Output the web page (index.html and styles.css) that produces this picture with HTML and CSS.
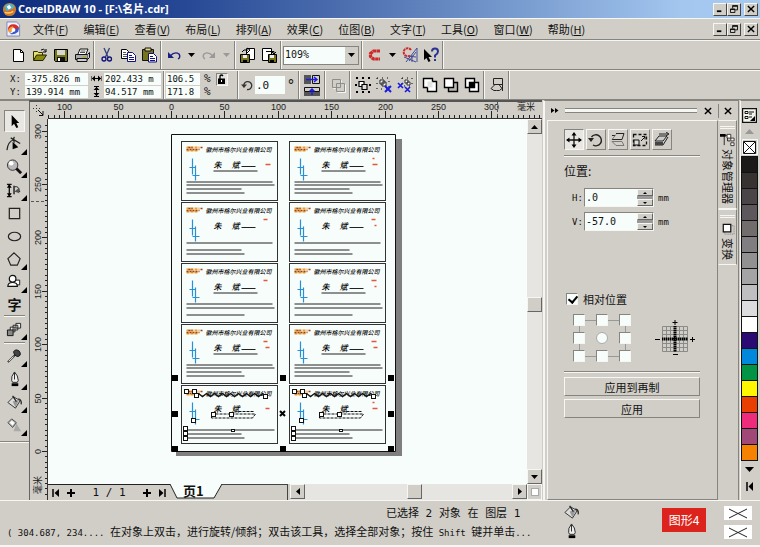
FILE: index.html
```html
<!DOCTYPE html>
<html lang="zh-CN">
<head>
<meta charset="utf-8">
<title>CorelDRAW 10 - [F:\名片.cdr]</title>
<link rel="stylesheet" href="styles.css">
</head>
<body>
<header class="titlebar">
  <svg class="app-icon" viewBox="0 0 16 16"><circle cx="8" cy="8" r="7" fill="#b9853b"/><path d="M3 4q5-4 10 0l-2 5-6 1z" fill="#4fb4cf"/><path d="M2 9q3 2 7-1l5-1q0 6-6 7-5 0-6-5z" fill="#e36a22"/><path d="M5 5l3-2 2 3-3 2z" fill="#fff"/><path d="M3 11q5 2 9-1" stroke="#ffd95a" stroke-width="1.5" fill="none"/></svg>
  <h1>CorelDRAW 10 - [F:\名片.cdr]</h1>
  <div class="winbtns">
    <button aria-label="最小化"><svg viewBox="0 0 9 9"><path d="M1 7h5" stroke="#000" stroke-width="2"/></svg></button>
    <button aria-label="还原"><svg viewBox="0 0 9 9"><path d="M3 4V.5h5.500v5H6M3 1.500h5.500M.5 4.500h5v4h-5zM.5 5h5" fill="none" stroke="#000"/></svg></button>
    <button class="close" aria-label="关闭"><svg viewBox="0 0 9 9"><path d="M1 1l7 7M8 1L1 8" stroke="#000" stroke-width="1.600"/></svg></button>
  </div>
</header>

<nav class="menubar">
  <svg class="doc-icon" viewBox="0 0 16 16"><path d="M1 .5h10l3.500 3v12H1z" fill="#eef0fb" stroke="#7c86b8"/><path d="M2 9q0-6 6-6 4 0 6 4l-3 2-4-2-3 5z" fill="#d62c2c"/><path d="M2 10q1-4 5-5l2 2-4 5z" fill="#f0a03c"/><path d="M4 13q4 2 9-2l1-4-4 1-3 4z" fill="#3b58c8"/><circle cx="8" cy="9" r="2" fill="#fff"/></svg>
  <button>文件(<u>F</u>)</button><button>编辑(<u>E</u>)</button><button>查看(<u>V</u>)</button><button>布局(<u>L</u>)</button><button>排列(<u>A</u>)</button><button>效果(<u>C</u>)</button><button>位图(<u>B</u>)</button><button>文字(<u>T</u>)</button><button>工具(<u>O</u>)</button><button>窗口(<u>W</u>)</button><button>帮助(<u>H</u>)</button>
  <div class="winbtns">
    <button aria-label="最小化文档"><svg viewBox="0 0 9 9"><path d="M1 7h5" stroke="#000" stroke-width="2"/></svg></button>
    <button aria-label="还原文档"><svg viewBox="0 0 9 9"><path d="M3 4V.5h5.500v5H6M3 1.500h5.500M.5 4.500h5v4h-5zM.5 5h5" fill="none" stroke="#000"/></svg></button>
    <button class="close" aria-label="关闭文档"><svg viewBox="0 0 9 9"><path d="M1 1l7 7M8 1L1 8" stroke="#000" stroke-width="1.600"/></svg></button>
  </div>
</nav>

<div class="toolbar">
  <button class="tb" aria-label="新建"><svg viewBox="0 0 16 16"><path d="M2.500 2.500h7l3 3v9h-10z" fill="#fff" stroke="#000"/><path d="M9.500 2.500v3h3" fill="none" stroke="#000"/></svg></button>
  <button class="tb" aria-label="打开"><svg viewBox="0 0 16 16"><path d="M1.500 13V4.500h4l1 1h4V8" fill="#e8e070" stroke="#333300"/><path d="M1.500 13.500l3-5.500h10l-3.500 5.500z" fill="#8a8a10" stroke="#222200"/><path d="M9 3q3-2 4.500 1M14 2v3h-3" fill="none" stroke="#000"/></svg></button>
  <button class="tb" aria-label="保存"><svg viewBox="0 0 16 16"><path d="M1.500 2.500h13v12h-12l-1-1z" fill="#77751b" stroke="#000"/><path d="M4 3h8v5H4z" fill="#d8d8d0"/><path d="M4 10h8v4H4z" fill="#111"/><path d="M5 11h2v3H5z" fill="#fff"/></svg></button>
  <button class="tb" aria-label="打印"><svg viewBox="0 0 16 16"><path d="M4 7l2-5h8l-2 5" fill="#fff" stroke="#111"/><path d="M6.500 4h5M6 5.500h5" stroke="#555"/><path d="M1.500 7.500h12v5h-12z" fill="#aaa" stroke="#111"/><path d="M13.500 7.500l2-2v5l-2 2M3 14.500h10v-3H3z" fill="#ccc" stroke="#111"/><path d="M9 10h3" stroke="#a9a400"/></svg></button>
  <i class="sep"></i>
  <button class="tb" aria-label="剪切"><svg viewBox="0 0 16 16"><path d="M5 1l4 9M10.500 1L6.500 10" stroke="#333f77" stroke-width="1.300"/><circle cx="5" cy="12" r="2" fill="none" stroke="#10107e" stroke-width="1.300"/><circle cx="10.500" cy="12" r="2" fill="none" stroke="#10107e" stroke-width="1.300"/></svg></button>
  <button class="tb" aria-label="复制"><svg viewBox="0 0 16 16"><path d="M1.500 2.500h5l2 2v7h-7z" fill="#fff" stroke="#000"/><path d="M3 5.500h3M3 7.500h4M3 9.500h4" stroke="#555"/><path d="M7.500 5.500h5l3 3v6h-8z" fill="#fff" stroke="#10107e"/><path d="M9 8.500h3M9 10.500h5M9 12.500h5" stroke="#10107e"/></svg></button>
  <button class="tb" aria-label="粘贴"><svg viewBox="0 0 16 16"><path d="M1.500 2.500h11v11h-11z" fill="#77751b" stroke="#111"/><path d="M4 1h6v3H4z" fill="#ddd68a" stroke="#111"/><path d="M7.500 6.500h5l3 3v5.500h-8z" fill="#fff" stroke="#10107e"/><path d="M9 9.500h3M9 11.500h5M9 13.500h5" stroke="#10107e"/></svg></button>
  <i class="sep"></i>
  <button class="tb" aria-label="撤消"><svg viewBox="0 0 16 16"><path d="M4 9q5-5 9-2 2 3-1 5" fill="none" stroke="#1b2080" stroke-width="1.400"/><path d="M2 5v6h6z" fill="#1b2080"/></svg></button>
  <button class="dd" aria-label="撤消列表"><svg viewBox="0 0 7 4"><path d="M0 0h7L3.500 4z"/></svg></button>
  <button class="tb" aria-label="重做"><svg viewBox="0 0 16 16"><path d="M12 9q-5-5-9-2-2 3 1 5" fill="none" stroke="#999" stroke-width="1.400"/><path d="M14 5v6H8z" fill="#999"/></svg></button>
  <button class="dd off" aria-label="重做列表"><svg viewBox="0 0 7 4"><path d="M0 0h7L3.500 4z"/></svg></button>
  <i class="sep"></i>
  <button class="tb" aria-label="导入"><svg viewBox="0 0 16 16"><path d="M6.500 1.500h8v11h-8z" fill="#fff" stroke="#000"/><path d="M.5 7.500h9v8h-9z" fill="#77751b" stroke="#000"/><path d="M3 8h4v3H3z" fill="#eee"/><path d="M3 13h4v2H3z"/><path d="M2 5q1-3 6-2M7 1l3 2-3 3" fill="none" stroke="#000"/></svg></button>
  <button class="tb" aria-label="导出"><svg viewBox="0 0 16 16"><path d="M1.500 1.500h9v12h-9z" fill="#fff" stroke="#000"/><path d="M7.500 7.500h8v8h-8z" fill="#77751b" stroke="#000"/><path d="M9 8h4v3H9z" fill="#eee"/><path d="M9 13h4v2H9z"/><path d="M5 4.500h8v2M11 5l2 2 2-2" fill="none" stroke="#000"/></svg></button>
  <i class="sep"></i>
  <div class="combo">
    <select aria-label="缩放级别"><option>109%</option></select>
    <span class="combo-arrow"><svg viewBox="0 0 7 4"><path d="M0 0h7L3.500 4z"/></svg></span>
  </div>
  <i class="sep"></i>
  <button class="tb" aria-label="应用程序启动器"><svg viewBox="0 0 16 16"><path d="M13 4H6.500L3.500 6.500v3L6.500 12H13" fill="none" stroke="#d02828" stroke-width="3.200" stroke-dasharray="3.400 .4"/></svg></button>
  <button class="dd" aria-label="启动器列表"><svg viewBox="0 0 7 4"><path d="M0 0h7L3.500 4z"/></svg></button>
  <button class="tb" aria-label="社区"><svg viewBox="0 0 16 16"><path d="M4 15L15 1v14M2 10l12 5M6 9l8 1M7 14l7-9M10 8v7" fill="none" stroke="#424c9c"/><path d="M9 3A4 4 0 1 0 8 8.500" fill="none" stroke="#d02828" stroke-width="2" stroke-dasharray="2.500 .7"/></svg></button>
  <button class="tb" aria-label="这是什么"><svg viewBox="0 0 16 16"><path d="M1 2v11l2.500-2 2 4 2-1-2-4H9z"/><path d="M9 4.500q0-3 3-3t3 3q0 2-3 4v2" fill="none" stroke="#2a3390" stroke-width="2"/><path d="M11 12h2v2h-2z" fill="#2a3390"/></svg></button>
  <i class="sep"></i>
</div>

<div class="toolbar propbar">
  <div class="pos-grid">
    <label for="px">X:</label><input id="px" value="-375.826 m"><svg viewBox="0 0 11 11"><path d="M0 3v5M11 3v5" stroke="#000"/><path d="M1 5.500h9" stroke="#000"/><path d="M1 5.500l3-3v6zM10 5.500l-3-3v6z"/></svg><input aria-label="宽度" value="202.433 m">
    <label for="py">Y:</label><input id="py" value="139.914 mm"><svg viewBox="0 0 11 11"><path d="M3 .5h5M3 10.500h5M5.500 1v9" stroke="#000"/><path d="M5.500 1l-3 3h6zM5.500 10l-3-3h6z"/></svg><input aria-label="高度" value="94.517 mm">
  </div>
  <i class="sep"></i>
  <div class="scale-grid">
    <input id="sx" value="106.5"><label for="sx">%</label>
    <input id="sy" value="171.8"><label for="sy">%</label>
  </div>
  <button class="lock" aria-label="锁定比例"><svg viewBox="0 0 10 10"><path d="M1 4.500h7V10H1z"/><path d="M3 5V2q1.500-2 3 0" fill="none" stroke="#000" stroke-width="1.300"/><path d="M4 6h1v2H4z" fill="#fff"/></svg></button>
  <i class="sep"></i>
  <label class="rot" for="rot"><svg viewBox="0 0 12 12"><path d="M3 8a4 4 0 1 1 3 2.500" fill="none" stroke="#333" stroke-width="1.300"/><path d="M0 5.500h6L3 9z" fill="#333"/></svg></label>
  <input class="rot-in" id="rot" value=".0"><span class="deg">°</span>
  <i class="sep"></i>
  <div class="mirror">
    <button aria-label="水平镜像"><svg viewBox="0 0 16 9"><path d="M0 0h7v9H0z" fill="#555"/><path d="M8.500.5h7v8h-7z" fill="#d0cec7" stroke="#111"/><path d="M2 4.500h11M10 2l3 2.500L10 7" fill="none" stroke="#1a1ae0" stroke-width="1.400"/></svg></button>
    <button aria-label="垂直镜像"><svg viewBox="0 0 16 9"><path d="M.5.500h15v4H.5z" fill="#d0cec7" stroke="#111"/><path d="M0 5h16v4H0z" fill="#555"/><path d="M8 8V2M5.500 4.500L8 2l2.500 2.500" fill="none" stroke="#1a1ae0" stroke-width="1.400"/></svg></button>
  </div>
  <i class="sep"></i>
  <button class="tb" aria-label="合并"><svg viewBox="0 0 16 16"><path d="M2.500 2.500h8v8h-8z" fill="none" stroke="#8e8e8a"/><path d="M6.500 6.500h8v8h-8z" fill="none" stroke="#8e8e8a"/><path d="M3.500 11.500h2M11.500 3.500v2M7.500 15.500h8v-8" fill="none" stroke="#f6f6f2"/></svg></button>
  <i class="sep"></i>
  <button class="tb" aria-label="群组"><svg viewBox="0 0 16 16"><path d="M1 0h2v2H1zM7 0h2v2H7zM13 0h2v2h-2zM0 7h2v2H0zM14 7h2v2h-2zM1 14h2v2H1zM7 14h2v2H7zM13 14h2v2h-2z"/><path d="M4 4.500h5v5H4z" fill="#fff" stroke="#000" stroke-width="1.200"/><path d="M7 7.500h5v5H7z" fill="#ddd" stroke="#000" stroke-width="1.200"/></svg></button>
  <button class="tb" aria-label="取消群组"><svg viewBox="0 0 16 16"><path d="M1 1h12v11H1z" fill="none" stroke="#000" stroke-dasharray="1 4"/><path d="M4 3h4v4H4zM6 5h4v4H6z" fill="#fff" stroke="#222"/><path d="M9 9l6 6M15 9l-6 6" stroke="#1a1ae0" stroke-width="2"/></svg></button>
  <button class="tb" aria-label="取消全部群组"><svg viewBox="0 0 16 16"><path d="M5 1h10v8H5z" fill="none" stroke="#000" stroke-dasharray="1 4"/><path d="M8 3h3v3H8zM10 5h3v3h-3z" fill="#fff" stroke="#333"/><path d="M1 6l5 5M6 6l-5 5M8 10l5 5M13 10l-5 5" stroke="#1a1ae0" stroke-width="1.600"/></svg></button>
  <i class="sep"></i>
  <button class="tb" aria-label="焊接"><svg viewBox="0 0 16 16"><path d="M1.500 1.500h9v3h4v10h-9v-4h-4z" fill="#fff" stroke="#000" stroke-width="1.400"/><path d="M5.500 4.500h5v6h-5z" fill="#e5e5e0"/></svg></button>
  <button class="tb" aria-label="修剪"><svg viewBox="0 0 16 16"><path d="M5.500 5.500h9v9h-9z" fill="#b8b8b4" stroke="#000" stroke-width="1.400"/><path d="M1.500 1.500h9v9h-9z" fill="#fff" stroke="#000" stroke-width="1.400"/></svg></button>
  <button class="tb" aria-label="相交"><svg viewBox="0 0 16 16"><path d="M1.500 1.500h9v9h-9zM5.500 5.500h9v9h-9z" fill="#fff" stroke="#000" stroke-width="1.400"/><path d="M5 5h6v6H5z"/></svg></button>
  <i class="sep"></i>
  <button class="tb" aria-label="转换为曲线"><svg viewBox="0 0 16 16"><path d="M4.500 1.500h9v6h-9z" fill="none" stroke="#222"/><path d="M13.500 7v7M6 7.500L2 11.500q3 3 5.500 2 3 1 5.500-2l-3-4" fill="none" stroke="#222"/></svg></button>
  <i class="sep"></i>
</div>

<main>
  <aside class="toolbox">
    <button class="tool on" aria-label="挑选工具"><svg viewBox="0 0 18 18"><path d="M6 2v12l2.500-2.500L11 16l2-1-2-4.500h3z"/></svg></button>
    <button class="tool fly" aria-label="形状工具"><svg viewBox="0 0 18 18"><path d="M1 15q1-9 7-11M5 2l10 6M9 1q-2 2 0 6" fill="none" stroke="#222" stroke-width="1.300"/><path d="M7 6v8l6-2z"/></svg></button>
    <button class="tool fly" aria-label="缩放工具"><svg viewBox="0 0 18 18"><circle cx="7" cy="6.500" r="5.500" fill="#b9b9b9" stroke="#333"/><circle cx="5.500" cy="4.500" r="2.500" fill="#fff"/><path d="M11 10l5 5" stroke="#111" stroke-width="3"/></svg></button>
    <button class="tool fly" aria-label="刻刀与度量"><svg viewBox="0 0 18 18"><path d="M1 2.500h5M1 15.500h5M3.500 3v12M8.500 4v9" stroke="#111" stroke-width="1.400"/><path d="M3.500 2L1 6h5zM3.500 16L1 12h5z"/><path d="M9 5q5-1 5 5M10 10h5" fill="none" stroke="#222"/><path d="M9 10l5-4v6z" fill="#555"/></svg></button>
    <button class="tool" aria-label="矩形工具"><svg viewBox="0 0 18 18"><path d="M3.500 3.500h11v11h-11z" fill="none" stroke="#222" stroke-width="1.300"/></svg></button>
    <button class="tool" aria-label="椭圆工具"><svg viewBox="0 0 18 18"><ellipse cx="9" cy="9" rx="6.500" ry="4.500" fill="none" stroke="#222" stroke-width="1.300"/></svg></button>
    <button class="tool fly" aria-label="多边形工具"><svg viewBox="0 0 18 18"><path d="M8.500 2L15 8l-3 7H5L2 8z" fill="none" stroke="#222" stroke-width="1.200"/></svg></button>
    <button class="tool fly" aria-label="基本形状"><svg viewBox="0 0 18 18"><path d="M7.500 6.500h7v5h-7z" fill="#fff" stroke="#111"/><circle cx="7" cy="5" r="3.500" fill="#fff" stroke="#111" stroke-width="1.300"/><path d="M2 13q0-4 5-4t5 4z" fill="#fff" stroke="#111" stroke-width="1.300"/></svg></button>
    <button class="tool text" aria-label="文本工具">字</button>
    <i class="hr"></i>
    <button class="tool fly" aria-label="交互式调和"><svg viewBox="0 0 18 18"><path d="M10.500 2.500h5v5h-5zM7.500 4.500h5v5h-5zM4.500 6.500h5v5h-5z" fill="#eee" stroke="#222"/><path d="M1.500 9.500h6v6h-6z" fill="#888" stroke="#111"/></svg></button>
    <i class="hr"></i>
    <button class="tool fly" aria-label="滴管工具"><svg viewBox="0 0 18 18"><path d="M2 15l8-8" stroke="#333" stroke-width="2"/><path d="M8 4q1 5 5 5 3-1 2-4-1-3-4-3-2 0-3 2z" fill="#444" stroke="#111"/><path d="M3 14l5-5" stroke="#eee"/></svg></button>
    <button class="tool fly" aria-label="轮廓工具"><svg viewBox="0 0 18 18"><path d="M9 1q-4 5-3 9l1 2h5l1-2q0-5-4-9z" fill="#eee" stroke="#222"/><path d="M9 2v7" stroke="#222"/><path d="M6 13h7v3H6z"/></svg></button>
    <button class="tool fly" aria-label="填充工具"><svg viewBox="0 0 18 18"><path d="M2 9l6-6 7 4-5 8z" fill="#ddd" stroke="#333"/><path d="M7 8l7-2-4 8z" fill="#999"/><path d="M7 2l4 6M13 5q4 1 3 6" fill="none" stroke="#222" stroke-width="1.300"/></svg></button>
    <button class="tool fly" aria-label="交互式填充"><svg viewBox="0 0 18 18"><path d="M2 6l4-4 5 4-4 5z" fill="#bbb" stroke="#444"/><path d="M4 6l2-2 3 2-2 3z" fill="#fff"/><path d="M11 7l5 8H8z" fill="#aaa"/></svg></button>
    <i class="hr last"></i>
  </aside>

  <section class="doc">
    <div class="ruler-corner"><svg viewBox="0 0 12 12"><path d="M3.500 0v9M0 3.500h9" stroke="#333" stroke-dasharray="1 2"/><path d="M5 5l5 5M10 6v4.500H6" fill="none" stroke="#111"/></svg></div>
    <div class="hruler"><svg id="hruler" width="493" height="17" viewBox="48 102 493 17"></svg></div>
    <div class="vruler"><svg id="vruler" width="18" height="381" viewBox="30 119 18 381"></svg></div>
    <div class="canvas">
      <svg id="page" width="478" height="365" viewBox="48 119 478 365">
        <path d="M176 139h226v317H176z" fill="#7f7f7f"/>
        <path d="M171.500 134.500h224v317h-224z" fill="#f7fdfa" stroke="#111"/>
        <g id="cards"></g>
        <g id="handles"></g>
      </svg>
    </div>
    <div class="vscroll">
      <button aria-label="向上滚动"><svg viewBox="0 0 7 4"><path d="M0 4h7L3.500 0z"/></svg></button>
      <span class="thumb"></span>
      <button aria-label="向下滚动"><svg viewBox="0 0 7 4"><path d="M0 0h7L3.500 4z"/></svg></button>
    </div>
    <div class="pagebar">
      <div class="pagenav">
        <button aria-label="首页"><svg viewBox="0 0 8 8"><path d="M1 0v8" stroke="#000" stroke-width="1.500"/><path d="M7 0v8L2.500 4z"/></svg></button>
        <button aria-label="前加页"><svg viewBox="0 0 8 8"><path d="M4 0v8M0 4h8" stroke="#000" stroke-width="2"/></svg></button>
        <span class="pagecount">1 / 1</span>
        <button aria-label="后加页"><svg viewBox="0 0 8 8"><path d="M4 0v8M0 4h8" stroke="#000" stroke-width="2"/></svg></button>
        <button aria-label="末页"><svg viewBox="0 0 8 8"><path d="M7 0v8" stroke="#000" stroke-width="1.500"/><path d="M1 0v8l4.500-4z"/></svg></button>
      </div>
      <button class="pagetab"><svg viewBox="0 0 52 15"><path d="M0 0l7 14h37l8-14z" fill="#f7fdfa"/><path d="M0 0l7 14h37l8-14" fill="none" stroke="#222"/></svg><span>页1</span></button>
      <span class="tabspace"></span>
      <div class="hscroll">
        <button aria-label="向左滚动"><svg viewBox="0 0 4 7"><path d="M4 0v7L0 3.500z"/></svg></button>
        <span class="thumb"></span>
        <button aria-label="向右滚动"><svg viewBox="0 0 4 7"><path d="M0 0v7l4-3.500z"/></svg></button>
      </div>
    </div>
    <div class="navigator"><i></i></div>
  </section>

  <section class="docker">
    <div class="dockhead">
      <svg class="chev" viewBox="0 0 8 5"><path d="M0 0v5l3.500-2.500zM4 0v5l3.500-2.500z"/></svg>
      <span class="grip"></span>
      <button aria-label="关闭泊坞窗"><svg viewBox="0 0 9 9"><path d="M1 1l7 7M8 1L1 8" stroke="#000" stroke-width="1.600"/></svg></button>
      <button class="second" aria-label="关闭全部"><svg viewBox="0 0 9 9"><path d="M1 1l7 7M8 1L1 8" stroke="#000" stroke-width="1.600"/></svg></button>
    </div>
    <div class="dockbody">
      <div class="panel">
        <div class="modes">
          <button class="on" aria-label="位置"><svg viewBox="0 0 16 16"><path d="M8 1v14M1 8h14" stroke="#111" stroke-width="1.300"/><path d="M8 0L5.500 3.500h5zM8 16l-2.500-3.500h5zM0 8l3.500-2.500v5zM16 8l-3.500-2.500v5z"/></svg></button>
          <button aria-label="旋转"><svg viewBox="0 0 16 16"><path d="M3.500 5A5.500 5.500 0 1 1 5 13" fill="none" stroke="#222" stroke-width="1.400"/><path d="M0 6h6L3 10z" fill="#222"/></svg></button>
          <button aria-label="缩放和镜像"><svg viewBox="0 0 16 16"><path d="M6 1.500h8M5 3.500h-3M2 7.500h10l2-6" fill="none" stroke="#222"/><path d="M2 7.500l4-5M2 9.500h10l2 4H6z" fill="none" stroke="#777"/></svg></button>
          <button aria-label="大小"><svg viewBox="0 0 16 16"><path d="M1.500 2.500h13v11h-13z" fill="none" stroke="#111" stroke-width="1.300" stroke-dasharray="3 2"/><path d="M2 8h5v5H2z" fill="#ddd" stroke="#111"/><path d="M9 9l4-4M10 4.500h3v3" fill="none" stroke="#111"/></svg></button>
          <button aria-label="倾斜"><svg viewBox="0 0 16 16"><path d="M1 9l4-5h8l-4 5zM1 13h8l5-8" fill="#ccc" stroke="#222"/><path d="M1 10h8v3H1z" fill="#444"/><path d="M5 2h9M12 0l3 2-3 2" fill="none" stroke="#222"/></svg></button>
        </div>
        <hr>
        <h2>位置:</h2>
        <div class="field"><label for="h">H:</label><div class="spin"><input id="h" value=".0"><span><button aria-label="增大 H"><svg viewBox="0 0 4 2"><path d="M0 2h4L2 0z"/></svg></button><button aria-label="减小 H"><svg viewBox="0 0 4 2"><path d="M0 0h4L2 2z"/></svg></button></span></div><b>mm</b></div>
        <div class="field"><label for="v">V:</label><div class="spin"><input id="v" value="-57.0"><span><button aria-label="增大 V"><svg viewBox="0 0 4 2"><path d="M0 2h4L2 0z"/></svg></button><button aria-label="减小 V"><svg viewBox="0 0 4 2"><path d="M0 0h4L2 2z"/></svg></button></span></div><b>mm</b></div>
        <label class="rel"><input type="checkbox" checked>相对位置</label>
        <div class="anchors">
          <div class="anchor-grid">
            <input type="checkbox" aria-label="左上"><input type="checkbox" aria-label="上"><input type="checkbox" aria-label="右上">
            <input type="checkbox" aria-label="左"><input type="radio" aria-label="中心"><input type="checkbox" aria-label="右">
            <input type="checkbox" aria-label="左下"><input type="checkbox" aria-label="下"><input type="checkbox" aria-label="右下">
          </div>
          <svg class="axes" viewBox="0 0 40 38"><path d="M7.500 7.500h25v25h-25zM11.500 7v26M15.500 7v26M24.500 7v26M28.500 7v26M7 11.500h26M7 15.500h26M7 24.500h26M7 28.500h26" fill="none" stroke="#8b8b88"/><path d="M20 7v26M7 20h26" stroke="#000" stroke-width="3" stroke-dasharray="1.500 .5"/><path d="M0 20.500h5M35 20.500h5M37.500 18v5M17.500 3.500h5M20 1v5M18 35.500h5" stroke="#000"/></svg>
        </div>
        <hr>
        <div class="applies"><button>应用到再制</button><button>应用</button></div>
      </div>
      <div class="tabs">
        <button><i></i><svg viewBox="0 0 16 16"><path d="M1 3.500h7M4.500 3.500V14M8 3.500v6h3" fill="none" stroke="#222"/><path d="M0 2h3v3H0zM3 2h3v3H3z"/><path d="M7.500 2.500h4v4h-4zM11.500 6.500h3.500v3h-3.500zM11.500 11.500h3.500v3h-3.500z" fill="#fff" stroke="#333"/></svg><span>对象管理器</span></button>
        <button class="active"><i></i><svg viewBox="0 0 16 16"><path d="M5 5h10v9H5z" fill="none" stroke="#777" stroke-dasharray="1 1"/><path d="M3.500 3.500h8v8h-8z" fill="#fff" stroke="#111" stroke-width="1.300"/></svg><span>变换</span></button>
      </div>
    </div>
  </section>

  <aside class="palette">
    <svg class="pal-icon" viewBox="0 0 15 15"><path d="M.5.500h14v14H.5z" fill="#f4f4ee" stroke="#111" stroke-width="1.400"/><path d="M3 3.500h3v2H3zM3 8.500h3v2H3z" fill="none" stroke="#111"/><path d="M7 4h5M7 6h3M7 9h3" stroke="#111"/><path d="M13 8v5H8z"/></svg>
    <svg class="arrow off" viewBox="0 0 9 5"><path d="M0 5h9L4.500 0z"/></svg>
    <button class="none" aria-label="无颜色"><svg viewBox="0 0 13 13"><path d="M.5.500h12v12H.5zM1 1l11 11M12 1L1 12" fill="#fff" stroke="#111"/></svg></button>
    <div class="swatches" id="swatches"></div>
    <svg class="arrow" viewBox="0 0 9 5"><path d="M0 0h9L4.500 5z"/></svg>
    <svg class="expand" viewBox="0 0 8 9"><path d="M1 0v9" stroke="#000" stroke-width="1.500"/><path d="M7 0v9L2.500 4.500z"/></svg>
  </aside>
</main>

<footer class="status">
  <div class="messages">
    <p class="selection">已选择<kbd> 2 </kbd>对象<kbd> </kbd>在<kbd> </kbd>图层<kbd> 1</kbd></p>
    <p><kbd>( 304.687, 234.... </kbd>在对象上双击，进行旋转/倾斜；双击该工具，选择全部对象；按住<kbd> Shift </kbd>键并单击<kbd>...</kbd></p>
  </div>
  <div class="fills">
    <svg viewBox="0 0 18 18"><path d="M2 9l6-6 7 4-5 8z" fill="#ddd" stroke="#333"/><path d="M7 8l7-2-4 8z" fill="#999"/><path d="M7 2l4 6M13 5q4 1 3 6" fill="none" stroke="#222" stroke-width="1.300"/></svg>
    <svg viewBox="0 0 18 18"><path d="M9 1q-4 5-3 9l1 2h5l1-2q0-5-4-9z" fill="#eee" stroke="#222"/><path d="M9 2v7" stroke="#222"/><path d="M6 13h7v3H6z"/></svg>
  </div>
  <strong class="figure">图形4</strong>
  <div class="nofill">
    <svg viewBox="0 0 28 14"><path d="M0 0h28v14H0z" fill="#fff"/><path d="M5 3l18 9M23 3L5 12" stroke="#222"/></svg>
    <svg viewBox="0 0 28 14"><path d="M0 0h28v14H0z" fill="#fff"/><path d="M5 3l18 9M23 3L5 12" stroke="#222"/></svg>
  </div>
</footer>
<script src="app.js"></script>
</body>
</html>
```
FILE: styles.css
```css
:root {
  --face: #d0cec7;
  --light: #f6f6f2;
  --dark: #85847f;
  --paper: #f7fdfa;
  --cjk: "Noto Sans CJK SC", sans-serif;
  --mono: "DejaVu Sans Mono", "Noto Sans CJK SC", monospace;
}
* { box-sizing: border-box; }
body {
  margin: 0;
  min-height: 100vh;
  display: flex;
  flex-direction: column;
  background: var(--face);
  color: #111;
  font: 11px/14px var(--cjk);
}
svg { display: block; flex: none; }
button {
  margin: 0;
  padding: 0;
  border: 0;
  background: none;
  color: inherit;
  font: inherit;
  display: flex;
  align-items: center;
  justify-content: center;
}
input, select {
  margin: 0;
  padding: 0;
  min-width: 0;
  border: 0;
  border-radius: 0;
  background: var(--paper);
  color: #111;
  font: 9px/12px var(--mono);
}

.titlebar {
  height: 18px;
  display: flex;
  align-items: center;
  gap: 1px;
  padding: 0 2px;
  background: linear-gradient(90deg, #102c7c, #1f4190 20%, #5577b5 50%, #a3c7ef 90%, #a6caf0);
}
.app-icon { width: 15px; height: 15px; }
.titlebar h1 {
  flex: 1;
  margin: 0;
  color: #fff;
  font: bold 11px/16px "Open Sans", var(--cjk);
}
.winbtns { display: flex; margin-left: auto; }
.winbtns button {
  width: 14px;
  height: 13px;
  background: var(--face);
  border: 1px solid;
  border-color: var(--light) #444 #444 var(--light);
}
.winbtns .close { margin-left: 3px; }
.winbtns svg { width: 8px; height: 8px; }

.menubar {
  height: 22px;
  display: flex;
  align-items: center;
  gap: 15px;
  padding: 0 2px 0 6px;
  border-top: 1px solid var(--light);
  border-bottom: 1px solid var(--dark);
}
.doc-icon { width: 15px; height: 16px; margin-right: -3px; }
.menubar u { text-underline-offset: 1px; }

.toolbar {
  height: 30px;
  display: flex;
  align-items: center;
  padding-left: 8px;
  border-top: 1px solid var(--light);
  border-bottom: 1px solid var(--dark);
}
.tb { width: 21px; height: 21px; }
.tb svg { width: 16px; height: 16px; }
.dd { width: 14px; height: 21px; }
.dd svg { width: 7px; height: 4px; }
.off { fill: #999; }
.sep {
  flex: none;
  align-self: stretch;
  width: 2px;
  margin: 0 1px;
  border-left: 1px solid var(--dark);
  border-right: 1px solid var(--light);
}
.combo { position: relative; width: 76px; height: 19px; margin-right: 1px; }
.combo select {
  appearance: none;
  width: 100%;
  height: 100%;
  padding: 0 1px;
  border: 1px solid var(--dark);
  font-size: 10px;
}
.combo-arrow {
  position: absolute;
  right: 1px;
  top: 1px;
  bottom: 1px;
  width: 13px;
  display: flex;
  align-items: center;
  justify-content: center;
  background: var(--face);
  pointer-events: none;
}
.combo-arrow svg { width: 7px; height: 4px; }

.propbar { font: 9px/12px var(--mono); }
.pos-grid {
  display: grid;
  grid-template-columns: 17px 63px 16px 57px;
  grid-auto-rows: 12px;
  row-gap: 1px;
  align-items: stretch;
  margin-right: 1px;
}
.pos-grid label { padding-left: 2px; }
.pos-grid svg { width: 11px; height: 11px; margin-left: 3px; }
.pos-grid input, .scale-grid input { width: 100%; padding-left: 1px; }
.scale-grid {
  display: grid;
  grid-template-columns: 34px 12px;
  grid-auto-rows: 12px;
  gap: 1px 4px;
}
.scale-grid label { font-size: 11px; }
.lock {
  width: 12px;
  height: 13px;
  margin: 0 8px 12px 0;
  background: #e5e4df;
  border: 1px solid;
  border-color: var(--dark) var(--light) var(--light) var(--dark);
}
.lock svg { width: 10px; height: 10px; }
.rot svg { width: 12px; height: 12px; margin: 0 2px 0 1px; }
.rot-in { width: 30px; height: 18px; font-size: 11px; padding-left: 1px; }
.deg { width: 12px; font-size: 14px; text-align: center; }
.mirror { display: grid; gap: 3px; padding: 0 3px; }
.mirror svg { width: 16px; height: 9px; }

main { flex: 1; display: flex; min-height: 0; }

.toolbox {
  flex: none;
  width: 29px;
  display: flex;
  flex-direction: column;
  align-items: center;
  padding-top: 9px;
  border-top: 1px solid var(--dark);
}
.tool { position: relative; width: 21px; height: 22px; margin-bottom: 1px; }
.tool svg { width: 17px; height: 17px; }
.tool.on {
  background: #e8e7e3;
  border: 1px solid;
  border-color: var(--dark) var(--light) var(--light) var(--dark);
}
.tool.fly::after {
  content: "";
  position: absolute;
  right: -2px;
  bottom: 0;
  border: 3px solid;
  border-color: transparent #000 #000 transparent;
}
.tool.text { font: bold 14px/18px var(--cjk); height: 19px; }
.hr {
  flex: none;
  width: 21px;
  height: 2px;
  margin: 1px 0;
  border-top: 1px solid var(--dark);
  border-bottom: 1px solid var(--light);
}
.hr.last { width: 100%; margin-top: 4px; }

.doc {
  flex: 1;
  min-width: 0;
  display: grid;
  grid-template-columns: 18px minmax(0, 1fr) 15px;
  grid-template-rows: 17px minmax(0, 1fr) 16px;
  border-top: 2px solid #555;
  border-left: 1px solid #666;
}
.ruler-corner { display: grid; place-items: center; }
.ruler-corner svg { width: 12px; height: 12px; }
.hruler { grid-column: 2 / 4; overflow: hidden; border-bottom: 1px solid #333; }
.vruler { grid-row: 2 / 4; overflow: hidden; border-right: 1px solid #333; }
.hruler text, .vruler text { font: 9px "Liberation Sans", var(--cjk); text-anchor: middle; fill: #222; }
.canvas { overflow: hidden; background: var(--paper); }
.vscroll, .hscroll {
  display: flex;
  background: #e6e5e1;
}
.vscroll { flex-direction: column; justify-content: space-between; }
.vscroll button, .hscroll button, .thumb {
  flex: none;
  width: 15px;
  height: 15px;
  background: var(--face);
  border: 1px solid;
  border-color: var(--light) #666 #666 var(--light);
}
.vscroll svg { width: 7px; height: 4px; }
.hscroll svg { width: 4px; height: 7px; }
.vscroll .thumb { margin-top: 6px; }
.pagebar { grid-column: 2; display: flex; min-width: 0; }
.pagenav {
  display: flex;
  align-items: center;
  gap: 7px;
  padding: 0 4px 0 4px;
  border-top: 1px solid #222;
}
.pagenav svg { width: 8px; height: 8px; }
.pagecount { width: 54px; text-align: center; font: 11px/14px var(--mono); }
.pagetab { position: relative; width: 51px; height: 15px; }
.pagetab svg { width: 52px; height: 15px; }
.pagetab span { position: absolute; left: 13px; top: 0; font: bold 13px/14px var(--cjk); }
.tabspace { width: 67px; border: 1px solid #444; border-width: 1px 1px 0 0; }
.hscroll { flex: 1; margin-left: 2px; justify-content: space-between; }
.hscroll .thumb { margin-left: 12px; }
.navigator { display: grid; place-items: center; background: var(--face); border: 1px solid var(--light); }
.navigator i { width: 8px; height: 8px; background: #fff; border: 1px solid #aaa; }

.docker {
  flex: none;
  width: 196px;
  display: flex;
  flex-direction: column;
  border-top: 1px solid var(--dark);
  border-left: 2px solid var(--light);
  border-right: 1px solid var(--dark);
  margin-left: 1px;
}
.dockhead { height: 19px; display: flex; align-items: center; gap: 6px; padding: 0 6px; }
.chev { width: 8px; height: 5px; }
.grip { flex: 1; height: 5px; border: 1px solid var(--dark); border-width: 1px 0; background: var(--light); }
.dockhead button { width: 9px; height: 14px; }
.dockhead button svg { width: 8px; height: 8px; }
.dockhead .second { width: 14px; border-left: 1px solid var(--dark); padding-left: 4px; }
.dockbody { flex: 1; display: flex; }
.panel {
  flex: 1;
  margin-left: 2px;
  padding: 8px 17px 0 16px;
  border: 1px solid;
  border-color: var(--light) var(--dark) var(--dark) var(--light);
}
.modes { display: flex; gap: 2px; }
.modes button {
  width: 20px;
  height: 21px;
  border: 1px solid;
  border-color: var(--light) var(--dark) var(--dark) var(--light);
}
.modes .on { background: #e8e7e3; border-color: var(--dark) var(--light) var(--light) var(--dark); }
.modes svg { width: 16px; height: 16px; }
.panel hr { height: 2px; margin: 5px 0 6px; border: 0; border-top: 1px solid var(--dark); border-bottom: 1px solid var(--light); }
.panel .anchors + hr { margin: 9px 0 4px; }
.panel h2 { margin: 0 0 9px; font: 12px/16px var(--cjk); }
.field { display: flex; align-items: center; gap: 2px; margin-bottom: 5px; padding-left: 8px; font: 9px/12px var(--mono); }
.field label { width: 10px; white-space: nowrap; }
.field b { margin-left: 2px; font-weight: normal; }
.spin {
  display: flex;
  width: 70px;
  height: 19px;
  border: 1px solid;
  border-color: var(--dark) var(--light) var(--light) var(--dark);
}
.spin input { flex: 1; font-size: 10px; padding-left: 1px; }
.spin span { width: 16px; display: flex; flex-direction: column; justify-content: space-between; background: #999; }
.spin button { height: 7px; background: var(--face); border: 1px solid; border-color: var(--light) #666 #666 var(--light); }
.spin svg { width: 4px; height: 2px; }
.rel { display: flex; align-items: center; gap: 5px; margin: 61px 0 8px 2px; font: 11px/14px var(--cjk); }
.rel input, .anchor-grid input {
  appearance: none;
  background: var(--paper);
  border: 1px solid;
  border-color: var(--dark) var(--light) var(--light) var(--dark);
}
.rel input { position: relative; width: 12px; height: 12px; }
.rel input::after {
  content: "";
  position: absolute;
  left: 3px;
  top: 0;
  width: 4px;
  height: 7px;
  border: solid #000;
  border-width: 0 2px 2px 0;
  transform: rotate(40deg);
}
.anchors { display: flex; gap: 24px; margin-left: 9px; align-items: center; }
.anchor-grid {
  display: grid;
  grid-template-columns: repeat(3, 12px);
  gap: 6px 11px;
  background:
    linear-gradient(#999, #999) 6px 6px / 46px 1px no-repeat,
    linear-gradient(#999, #999) 6px 42px / 46px 1px no-repeat,
    linear-gradient(#999, #999) 6px 6px / 1px 36px no-repeat,
    linear-gradient(#999, #999) 52px 6px / 1px 36px no-repeat;
}
.anchor-grid input { width: 12px; height: 12px; }
.anchor-grid input[type=radio] { border-radius: 50%; border-color: #aaa; }
.axes { width: 40px; height: 38px; }
.applies { display: grid; gap: 3px; }
.applies button {
  height: 19px;
  border: 1px solid;
  border-color: var(--light) var(--dark) var(--dark) var(--light);
}
.tabs { width: 19px; margin-right: 1px; }
.tabs button {
  width: 100%;
  flex-direction: column;
  justify-content: flex-start;
  gap: 2px;
  padding: 5px 0 4px;
  border: 1px solid;
  border-color: var(--light) var(--dark) var(--light) transparent;
  font: 11px/14px var(--cjk);
}
.tabs i { width: 15px; height: 3px; border: 1px solid var(--light); border-width: 1px 0; margin-bottom: 1px; }
.tabs svg { width: 15px; height: 15px; }
.tabs span { writing-mode: vertical-rl; text-orientation: sideways; }

.palette {
  flex: none;
  width: 20px;
  margin-left: 1px;
  display: flex;
  flex-direction: column;
  align-items: center;
  padding: 7px 2px 0 0;
  border-top: 1px solid var(--dark);
  border-left: 1px solid var(--light);
}
.pal-icon { width: 15px; height: 15px; }
.arrow { width: 9px; height: 5px; margin: 6px 0 5px; }
.none { width: 16px; height: 16px; margin-bottom: 1px; border: 1px solid var(--light); }
.none svg { width: 13px; height: 13px; }
.swatches { width: 17px; border: 1px solid #111; border-bottom: 0; }
.swatches button { width: 100%; height: 16px; border-bottom: 1px solid #111; }
.expand { width: 8px; height: 9px; margin-top: 5px; }

.status {
  height: 47px;
  display: flex;
  align-items: center;
  padding: 0 8px 2px 7px;
  border-top: 1px solid var(--light);
  border-bottom: 2px solid var(--light);
}
.messages { width: 546px; white-space: nowrap; font-size: 11px; }
.messages p { margin: 0; line-height: 19px; }
.messages .selection { padding-left: 379px; }
.messages kbd { font: 9px/12px var(--mono); white-space: pre; }
.messages .selection kbd { font-size: 11px; }
.fills { margin-left: 10px; }
.fills svg { width: 17px; height: 17px; margin: 2px 0; }
.figure {
  margin: 0 18px 5px auto;
  width: 44px;
  background: #dc241c;
  color: #fff;
  text-align: center;
  font: 12px/24px var(--cjk);
}
.nofill { display: grid; gap: 5px; }
.nofill svg { width: 28px; height: 14px; }
```
FILE: app.js
```js
const NS = "http://www.w3.org/2000/svg";

function add(parent, tag, attrs, text) {
  const el = document.createElementNS(NS, tag);
  for (const k in attrs) el.setAttribute(k, attrs[k]);
  if (text) el.textContent = text;
  parent.appendChild(el);
  return el;
}

// Rulers: a tick every 5 mm, a labelled tick every 50 mm.
const STEP = 5.34;
const hr = document.getElementById("hruler");
const vr = document.getElementById("vruler");
let hd = "", vd = "";
for (let i = -23; i <= 69; i++) {
  const x = Math.round(171 + i * STEP) + 0.5;
  const major = i % 10 === 0;
  hd += `M${x} ${major ? 111 : 115}V119`;
  if (major && i <= 60) add(hr, "text", { x: x, y: 110 }, String(Math.abs(i * 5)));
}
for (let i = -8; i <= 61; i++) {
  const y = Math.round(451 - i * STEP) + 0.5;
  const major = i % 10 === 0;
  vd += `M${major ? 42 : 45} ${y}H48`;
  if (major && i >= 0) add(vr, "text", { transform: `translate(41 ${y}) rotate(-90)` }, String(i * 5));
}
add(hr, "path", { d: hd, stroke: "#222", fill: "none" });
add(hr, "path", { d: "M497.500 102V119", stroke: "#555", "stroke-dasharray": "2 2" });
add(hr, "text", { x: 526, y: 110 }, "毫米");
add(vr, "path", { d: vd, stroke: "#222", fill: "none" });
add(vr, "path", { d: "M31 201.500H46", stroke: "#555", "stroke-dasharray": "3 2" });
add(vr, "text", { transform: "translate(41 485) rotate(-90)" }, "毫米");

// Business cards, two columns by five rows.
const cards = document.getElementById("cards");
const cols = [181.5, 289.5];
const rows = [141.5, 202.5, 263.5, 324.5, 385.5];
const bodyLines = [
  "M5 40.500h86M5 43.500h88M5 47.500h55M5 51.500h58M32 29.500h44",
  "M5 40.500h86M5 47.500h55M5 51.500h58",
  "M5 40.500h86M5 44.500h88M5 51.500h58M32 29.500h44",
  "M5 40.500h86M5 43.500h88M5 47.500h55M5 51.500h58M32 29.500h44",
  "M5 44.500h88M5 48.500h55M5 52.500h58"
];
const leftMarks = ["M84 23h5", "M82 17h4", "M82 17h4", "M82 17h4M84 23h4", "M84 23h4"];
const rightMarks = ["M83 17h2M83 23h5", "M82 17h4M85 23h2", "M82 17h5M85 23h2", "M82 17h5M84 23h4", "M83 17h2M83 23h5"];
const brush = { "font-weight": "500", "font-style": "italic", "font-family": "Noto Sans CJK SC" };
cols.forEach((x, c) => rows.forEach((y, r) => {
  const g = add(cards, "g", { transform: `translate(${x} ${y})` });
  const chosen = r === 4;
  add(g, "rect", { width: 96, height: chosen ? 58 : 59, fill: "#f7fdfa", stroke: "#333" });
  add(g, "path", { d: "M5 6h13M5 9h12", stroke: "#e6a02c", "stroke-width": 2, "stroke-dasharray": "3 1" });
  add(g, "path", { d: "M5 8h13M7 6h4M19 6h2", stroke: "#a33c10", "stroke-width": 1.5, "stroke-dasharray": "2 1" });
  add(g, "text", { x: 24, y: 10, "font-size": 6, ...brush }, "徽州市格尔兴业有限公司");
  add(g, "text", { x: 32, y: 26, "font-size": 8, ...brush }, "朱");
  add(g, "text", { x: 50, y: 26, "font-size": 8, ...brush }, "斌");
  add(g, "path", { d: "M11 17v16M8 26h6M14 24v15M11 34h7", stroke: "#2b8fd6", fill: "none", "stroke-width": 1.2 });
  add(g, "path", { d: (c ? rightMarks : leftMarks)[r], stroke: "#e2583c", "stroke-width": 1.5 });
  add(g, "path", { d: bodyLines[r] + (chosen ? "" : "M60 25h14"), stroke: "#222", fill: "none" });
  if (chosen) {
    add(g, "path", { d: "M17 8l4 3 4-3 4 3 4-3 4 3 4-3 4 3 4-3 4 3 4-3 4 3 4-3 4 3 4-3 4 3 4-3 4 3", stroke: "#111", fill: "none", "stroke-width": 1.4 });
    add(g, "path", { d: "M30 28.500h44l-3 4H30zM57 26h16", stroke: "#111", fill: "none", "stroke-dasharray": "3 1" });
    for (const [nx, ny] of [[3, 4], [11, 4], [13, 8], [10, 33], [2, 41], [2, 46], [2, 51], [82, 9], [30, 27], [48, 27], [50, 44]])
      add(g, "rect", { x: nx, y: ny, width: nx === 50 ? 3 : 4, height: nx === 50 ? 2 : 4, fill: "#fff", stroke: "#111" });
  }
}));

// Selection handles round the last row.
const handles = document.getElementById("handles");
for (const [hx, hy] of [[175, 378], [283, 378], [391, 378], [175, 414], [391, 414], [175, 449], [283, 449], [391, 449]])
  add(handles, "rect", { x: hx - 3, y: hy - 3, width: 6, height: 6, fill: "#000" });
add(handles, "path", { d: "M280 411l5 5M285 411l-5 5", stroke: "#000", "stroke-width": 2 });

const colors = ["#1b1a18", "#373330", "#4a4647", "#5c585b", "#706d6c", "#807e80", "#929192", "#a5a4a5", "#bfbec0", "#dcdbdd", "#ffffff", "#2c0a74", "#0088dd", "#009444", "#fff700", "#e93f00", "#ee2c7c", "#a04878", "#f58200"];
const swatches = document.getElementById("swatches");
for (const c of colors) {
  const b = document.createElement("button");
  b.style.background = c;
  b.setAttribute("aria-label", c);
  swatches.appendChild(b);
}
```
